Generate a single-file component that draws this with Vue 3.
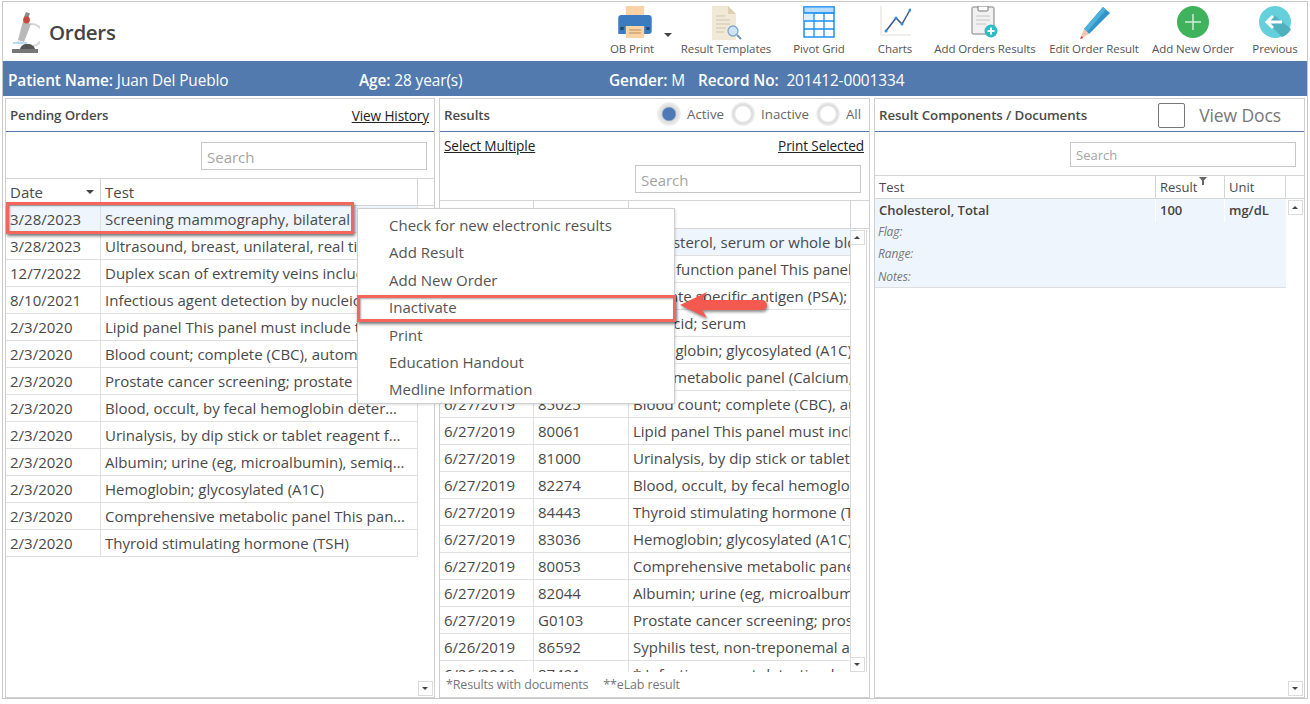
<script setup>
const tools = [
  { label: 'OB Print', icon: 'print' },
  { label: 'Result Templates', icon: 'tpl' },
  { label: 'Pivot Grid', icon: 'grid' },
  { label: 'Charts', icon: 'chart' },
  { label: 'Add Orders Results', icon: 'clip' },
  { label: 'Edit Order Result', icon: 'pencil' },
  { label: 'Add New Order', icon: 'plus' },
  { label: 'Previous', icon: 'prev' },
]
const pending = [
  ['3/28/2023', 'Screening mammography, bilateral'],
  ['3/28/2023', 'Ultrasound, breast, unilateral, real time with image documentation'],
  ['12/7/2022', 'Duplex scan of extremity veins including responses to compression'],
  ['8/10/2021', 'Infectious agent detection by nucleic acid (DNA or RNA)'],
  ['2/3/2020', 'Lipid panel This panel must include the following'],
  ['2/3/2020', 'Blood count; complete (CBC), automated'],
  ['2/3/2020', 'Prostate cancer screening; prostate specific antigen'],
  ['2/3/2020', 'Blood, occult, by fecal hemoglobin determination by immunoassay'],
  ['2/3/2020', 'Urinalysis, by dip stick or tablet reagent for bilirubin, glucose'],
  ['2/3/2020', 'Albumin; urine (eg, microalbumin), semiquantitative test result'],
  ['2/3/2020', 'Hemoglobin; glycosylated (A1C)'],
  ['2/3/2020', 'Comprehensive metabolic panel This panel must include the following'],
  ['2/3/2020', 'Thyroid stimulating hormone (TSH)'],
]
const results = [
  ['6/27/2019', '82465', 'Cholesterol, serum or whole blood, total'],
  ['6/27/2019', '80069', 'Renal function panel This panel must include'],
  ['6/27/2019', '84153', 'Prostate specific antigen (PSA); total'],
  ['6/27/2019', '84550', 'Uric acid; serum'],
  ['6/27/2019', '83036', 'Hemoglobin; glycosylated (A1C)'],
  ['6/27/2019', '80048', 'Basic metabolic panel (Calcium, total)'],
  ['6/27/2019', '85025', 'Blood count; complete (CBC), automated'],
  ['6/27/2019', '80061', 'Lipid panel This panel must include the following'],
  ['6/27/2019', '81000', 'Urinalysis, by dip stick or tablet reagent for'],
  ['6/27/2019', '82274', 'Blood, occult, by fecal hemoglobin determination'],
  ['6/27/2019', '84443', 'Thyroid stimulating hormone (TSH)'],
  ['6/27/2019', '83036', 'Hemoglobin; glycosylated (A1C)'],
  ['6/27/2019', '80053', 'Comprehensive metabolic panel This panel must'],
  ['6/27/2019', '82044', 'Albumin; urine (eg, microalbumin), semiquantitative'],
  ['6/27/2019', 'G0103', 'Prostate cancer screening; prostate specific antigen'],
  ['6/26/2019', '86592', 'Syphilis test, non-treponemal antibody; qualitative'],
  ['6/26/2019', '87491', '* Infectious agent detection by nucleic acid'],
]
const menu = ['Check for new electronic results', 'Add Result', 'Add New Order', 'Inactivate', 'Print', 'Education Handout', 'Medline Information']
</script>

<template>
  <div class="page">
    <div class="frame">
      <header class="top">
        <svg class="logo" width="28" height="42" viewBox="0 0 28 42">
          <path d="M18 13a11 11 0 0 1 3 22" fill="none" stroke="#d8d8d8" stroke-width="2"/>
          <path d="M11 10l8 3-7 18-6-2z" fill="#b9b9b9"/>
          <path d="M14 1l4 1.500-2 5-4-1.500z" fill="#8a8a8a"/>
          <circle cx="14.500" cy="9" r="3.400" fill="#c9483c"/>
          <path d="M6 29l5 2-1 3-5-2z" fill="#e4e4e4"/>
          <path d="M1 32h14" stroke="#9fd3f2" stroke-width="1.500"/>
          <path d="M8 38c1-3 3-5 7-5 5 0 7 2 8 5z" fill="#555"/>
          <rect x="0" y="38" width="26" height="4" fill="#777"/>
        </svg>
        <h1 class="title">Orders</h1>
        <nav class="tools">
          <div v-for="t in tools" :key="t.label" class="tool">
            <div class="tool-icon">
              <svg v-if="t.icon === 'print'" width="80" height="34" viewBox="0 0 80 34">
                <g transform="translate(23 0) scale(1.080 1)">
                  <rect x="10" y="0" width="17" height="12" fill="#fbd2a5"/>
                  <path d="M6 9h25a3 3 0 0 1 3 3v13a3 3 0 0 1-3 3H3V12a3 3 0 0 1 3-3z" fill="#3c7bbf"/>
                  <rect x="10" y="20" width="17" height="12" fill="#fbd2a5"/>
                  <path d="M13 24h11M13 27h11" stroke="#b98a5a"/>
                  <rect x="5" y="21" width="3" height="3" fill="#22456e"/>
                  <rect x="29" y="21" width="3" height="3" fill="#22456e"/>
                </g>
                <path d="M72 29h8l-4 4z" fill="#444" transform="translate(0 -2)"/>
              </svg>
              <svg v-else-if="t.icon === 'tpl'" width="34" height="34" viewBox="0 0 34 34">
                <path d="M3 0h16l8 8v26H3z" fill="#f1e8d6"/>
                <path d="M19 0l8 8h-8z" fill="#dccfb4"/>
                <path d="M7 10h9M7 14h14M7 18h14M7 22h10M7 26h8" stroke="#d2c7b0"/>
                <circle cx="24" cy="25" r="5" fill="#cfe3f6" stroke="#7fa6c9" stroke-width="1.300"/>
                <path d="M28 29l4 4" stroke="#6a8fb0" stroke-width="1.800"/>
              </svg>
              <svg v-else-if="t.icon === 'grid'" width="32" height="32" viewBox="0 0 32 32">
                <rect x="1" y="1" width="30" height="30" fill="#fff" stroke="#1e90f5" stroke-width="1.500"/>
                <rect x="1" y="1" width="30" height="6" fill="#b9dcfa" stroke="#1e90f5"/>
                <rect x="1" y="7" width="10" height="8" fill="#dcedfc"/>
                <path d="M1 7h30M1 15h30M1 23h30M11 7v24M21 7v24" stroke="#1e90f5" stroke-width="1.300"/>
              </svg>
              <svg v-else-if="t.icon === 'chart'" width="32" height="32" viewBox="0 0 32 32">
                <path d="M2 0v29h30" fill="none" stroke="#e2ded6"/>
                <path d="M7 25l10-13 6 6 8-14" fill="none" stroke="#3b5a85" stroke-width="1.500"/>
                <circle cx="7" cy="25" r="1.500" fill="#2f8fe6"/>
                <circle cx="17" cy="12" r="1.500" fill="#2f8fe6"/>
                <circle cx="23" cy="18" r="1.500" fill="#2f8fe6"/>
                <circle cx="31" cy="4" r="1.500" fill="#2f8fe6"/>
              </svg>
              <svg v-else-if="t.icon === 'clip'" width="28" height="32" viewBox="0 0 28 32">
                <rect x="1" y="1" width="22" height="27" rx="2" fill="#f1f1f1" stroke="#a9a9a9" stroke-width="1.500"/>
                <rect x="7" y="0" width="10" height="5" rx="1" fill="#fff" stroke="#777"/>
                <path d="M5 10h14M5 14h14M5 18h10" stroke="#c4c4c4"/>
                <circle cx="20" cy="25" r="6.500" fill="#2ebcc4"/>
                <path d="M20 21.500v7M16.500 25h7" stroke="#fff" stroke-width="2"/>
              </svg>
              <svg v-else-if="t.icon === 'pencil'" width="34" height="34" viewBox="0 0 34 34">
                <path d="M7 23L26 1l7 6-21 21z" fill="#3095c8"/>
                <path d="M7 23L26 1l3 2.500L10 26z" fill="#4fb0dc"/>
                <path d="M7 23l5 5-9 5z" fill="#f4c6ad"/>
                <path d="M3 33l1.500-3 2 2z" fill="#c44"/>
              </svg>
              <svg v-else-if="t.icon === 'plus'" width="32" height="32" viewBox="0 0 32 32">
                <circle cx="16" cy="16" r="16" fill="#3fb35c"/>
                <path d="M16 8v16M8 16h16" stroke="#cfeed7" stroke-width="1.500"/>
              </svg>
              <svg v-else width="32" height="32" viewBox="0 0 32 32">
                <circle cx="16" cy="16" r="16" fill="#66cfdc"/>
                <path d="M8 16l8-6 16 13a16 16 0 0 1-9 8z" fill="#4fb0be"/>
                <path d="M8 16h15M14 10l-6 6 6 6" fill="none" stroke="#fff" stroke-width="3"/>
              </svg>
            </div>
            <span class="tool-label">{{ t.label }}</span>
          </div>
        </nav>
      </header>

      <div class="patient">
        <span><b>Patient Name:</b> Juan Del Pueblo</span>
        <span><b>Age:</b> 28 year(s)</span>
        <span><b>Gender:</b> M</span>
        <span><b>Record No:</b>&nbsp; 201412-0001334</span>
      </div>

      <main class="panels">
        <section class="panel">
          <div class="phead">
            <span class="ptitle">Pending Orders</span>
            <a class="link">View History</a>
          </div>
          <div class="search-row left-search"><div class="search">Search</div></div>
          <div class="ghead left-cols">
            <div class="cell">Date<i class="sort"></i></div>
            <div class="cell">Test</div>
            <div class="cell"></div>
          </div>
          <div class="gbody">
            <div v-for="(r, i) in pending" :key="i" class="row left-cols" :class="{ sel: i === 0 }">
              <div class="cell">{{ r[0] }}</div>
              <div class="cell ell">{{ r[1] }}</div>
            </div>
            <button class="sb sb-down"></button>
          </div>
        </section>

        <section class="panel">
          <div class="phead">
            <span class="ptitle">Results</span>
            <div class="radios">
              <label class="radio on"><i></i>Active</label>
              <label class="radio"><i></i>Inactive</label>
              <label class="radio"><i></i>All</label>
            </div>
          </div>
          <div class="links"><a class="link">Select Multiple</a><a class="link">Print Selected</a></div>
          <div class="search-row mid-search"><div class="search">Search</div></div>
          <div class="ghead mid-cols mid-head">
            <div class="cell">Date</div>
            <div class="cell">Code</div>
            <div class="cell">Test</div>
            <div class="cell"></div>
          </div>
          <div class="gbody mid-body">
            <div v-for="(r, i) in results" :key="i" class="row mid-cols" :class="{ sel: i === 0 }">
              <div class="cell">{{ r[0] }}</div>
              <div class="cell">{{ r[1] }}</div>
              <div class="cell clip">{{ r[2] }}</div>
            </div>
            <div class="mid-scroll">
              <button class="sb"><i class="up"></i></button>
              <button class="sb"></button>
            </div>
          </div>
          <div class="foot"><span>*Results with documents</span><span>**eLab result</span></div>
        </section>

        <section class="panel">
          <div class="phead">
            <span class="ptitle">Result Components / Documents</span>
            <div class="docs"><i class="check"></i><span>View Docs</span></div>
          </div>
          <div class="search-row right-search"><div class="search small">Search</div></div>
          <div class="ghead right-cols right-head">
            <div class="cell">Test</div>
            <div class="cell">Result
              <svg class="funnel" width="8" height="8" viewBox="0 0 8 8"><path d="M0 0h8L5 3.500V8H3V3.500z" fill="#666"/></svg>
            </div>
            <div class="cell">Unit</div>
            <div class="cell"></div>
          </div>
          <div class="gbody">
            <div class="comp">
              <div class="comp-main right-cols">
                <div class="cell">Cholesterol, Total</div>
                <div class="cell">100</div>
                <div class="cell">mg/dL</div>
              </div>
              <div class="meta">Flag:</div>
              <div class="meta">Range:</div>
              <div class="meta">Notes:</div>
            </div>
            <button class="sb sb-up"><i class="up"></i></button>
            <button class="sb sb-down"></button>
          </div>
        </section>
      </main>
    </div>

    <div class="mark mark-row"></div>
    <ul class="ctx">
      <li v-for="m in menu" :key="m">{{ m }}</li>
    </ul>
    <div class="mark mark-item"></div>
    <svg class="arrow" width="92" height="32" viewBox="0 0 92 32">
      <path d="M2 14L29 1l-5 8h60a5 5 0 0 1 0 10H24l5 8z" fill="#f4594f"/>
    </svg>
  </div>
</template>

<style>
html, body { margin: 0; background: #fff; }
</style>

<style scoped>
.page {
  position: relative;
  width: 1310px;
  height: 704px;
  overflow: hidden;
  background: #fff;
  font-family: "Open Sans", "Noto Sans", sans-serif;
  font-size: 15px;
  color: #4a4a4a;
}
.frame {
  box-sizing: border-box;
  margin: 1px 0 0 2px;
  width: 1306px;
  height: 698px;
  border: 1px solid #c8c8c8;
  display: flex;
  flex-direction: column;
}
.top { height: 59px; display: flex; align-items: center; flex: none; }
.logo { margin: 0 0 0 9px; }
.title { margin: 0 0 0 9px; font-size: 20.500px; font-weight: 600; color: #444; letter-spacing: -0.3px; }
.tools {
  margin-left: auto;
  align-self: flex-start;
  display: grid;
  grid-template-columns: 94px 94px 92px 60px 120px 98px 100px 64px;
  width: 722px;
}
.tool { display: flex; flex-direction: column; align-items: center; height: 56px; padding-top: 4px; box-sizing: border-box; }
.tool-icon { height: 36px; display: flex; align-items: flex-start; justify-content: center; }
.tool-label { font-size: 11.500px; line-height: 14px; color: #555; white-space: nowrap; letter-spacing: -0.1px; }

.patient {
  flex: none;
  box-sizing: border-box;
  height: 35px;
  background: #527aae;
  color: #fff;
  display: grid;
  grid-template-columns: 351px 250px 89px auto;
  align-items: center;
  padding: 3px 0 0 5px;
  font-size: 15.400px;
  letter-spacing: -0.1px;
}
.patient b { font-weight: 600; }

.panels {
  flex: 1;
  min-height: 0;
  display: grid;
  grid-template-columns: 430px 431px 431px;
  column-gap: 4px;
  padding: 2px 0 0 2px;
  height: 600px;
}
.panel {
  box-sizing: border-box;
  height: 600px;
  border: 1px solid #cfcfcf;
  display: flex;
  flex-direction: column;
  position: relative;
}
.phead {
  flex: none;
  box-sizing: border-box;
  height: 33px;
  border-bottom: 1px solid #527aae;
  display: flex;
  align-items: center;
  justify-content: space-between;
  padding: 0 5px 0 4px;
}
.ptitle { font-size: 13.300px; font-weight: 600; color: #4a4a4a; letter-spacing: -0.1px; }
.link { font-size: 13.600px; color: #222; text-decoration: underline; letter-spacing: -0.1px; }

.search-row { flex: none; display: flex; justify-content: flex-end; box-sizing: border-box; }
.left-search { height: 46px; padding: 10px 7px 0 0; }
.mid-search { height: 41px; padding: 6px 8px 0 0; }
.right-search { height: 43px; padding: 10px 8px 0 0; }
.search {
  box-sizing: border-box;
  width: 226px;
  height: 28px;
  border: 1px solid #c8c8c8;
  color: #a5a5a5;
  font-size: 15px;
  line-height: 28px;
  padding-left: 5px;
}
.search.small { height: 25px; line-height: 24px; font-size: 13px; }

.links {
  flex: none;
  display: flex;
  justify-content: space-between;
  padding: 5px 5px 0 4px;
  height: 27px;
  box-sizing: border-box;
  line-height: 18px;
}

.ghead {
  flex: none;
  height: 28px;
  border-top: 1px solid #d5d5d5;
  border-bottom: 1px solid #d5d5d5;
  box-sizing: border-box;
  display: grid;
  background: #fff;
}
.left-cols { display: grid; grid-template-columns: 95px 317px 16px; }
.mid-cols { display: grid; grid-template-columns: 94px 95px 222px 18px; }
.right-cols { display: grid; grid-template-columns: 281px 69px 61px 18px; }
.mid-head { height: 29px; }
.right-head { height: 24px; font-size: 13px; }
.cell {
  box-sizing: border-box;
  padding-left: 4px;
  border-right: 1px solid #e0e0e0;
  white-space: nowrap;
  overflow: hidden;
  line-height: 26px;
  position: relative;
}
.ghead .cell { border-right-color: #d5d5d5; }
.ghead .cell:last-child { border-right: 0; }
.right-head .cell { line-height: 22px; }
.sort {
  position: absolute;
  right: 6px;
  top: 11px;
  border: 4px solid transparent;
  border-top-color: #444;
  border-bottom: 0;
}
.funnel { position: absolute; left: 43px; top: 1px; }
.gbody { flex: 1; min-height: 0; position: relative; overflow: hidden; }
.row { height: 27px; box-sizing: border-box; }
.row .cell { border-bottom: 1px solid #e0e0e0; }
.left-cols.row { grid-template-columns: 95px 317px; width: 412px; }
.mid-cols.row { grid-template-columns: 94px 95px 222px; width: 411px; }
.row.sel .cell { background: #eef5fc; }
.ell { text-overflow: ellipsis; padding-right: 9px; }
.clip { text-overflow: clip; }

.sb {
  display: block;
  box-sizing: border-box;
  width: 15px;
  height: 15px;
  padding: 0;
  border: 1px solid #dcdcdc;
  background: #fff;
  position: relative;
}
.sb::after {
  content: "";
  position: absolute;
  left: 3px;
  top: 5px;
  border: 3.500px solid transparent;
  border-top-color: #444;
  border-bottom: 0;
}
.sb:has(.up)::after { border-top: 0; border-bottom: 3.500px solid #444; border-top-color: transparent; }
.sb-down { position: absolute; right: 1px; bottom: 1px; }
.sb-up { position: absolute; right: 1px; top: 1px; }
.mid-scroll {
  position: absolute;
  right: 2px;
  top: 1px;
  bottom: 0;
  width: 15px;
  display: flex;
  flex-direction: column;
  justify-content: space-between;
  border-left: 1px solid #d8d8d8;
  border-right: 1px solid #d8d8d8;
}
.mid-scroll .sb { margin-left: -1px; }
.foot {
  flex: none;
  height: 25px;
  font-size: 12.500px;
  color: #777;
  display: flex;
  gap: 15px;
  padding-left: 6px;
  align-items: center;
  letter-spacing: -0.15px;
}

.radios { display: flex; align-items: center; font-size: 13.300px; color: #666; margin: -3px 3px 0 0; }
.radio { display: flex; align-items: center; }
.radio i {
  box-sizing: border-box;
  width: 24px;
  height: 24px;
  margin: 0 6px 0 7px;
  border-radius: 50%;
  background: radial-gradient(circle, #fff 0 7px, #dadada 9px, #f2f2f2 12px);
}
.radio.on i { background: radial-gradient(circle, #4f79b4 0 6px, #dadada 7.500px, #f2f2f2 12px); }

.docs { display: flex; align-items: center; gap: 14px; color: #777; font-size: 17.500px; margin-right: 18px; letter-spacing: -0.1px; }
.check { display: block; width: 27px; height: 25px; box-sizing: border-box; border: 1px solid #777; border-radius: 2px; }

.comp { width: 411px; height: 89px; background: #eef5fc; border-bottom: 1px solid #dedede; box-sizing: border-box; }
.comp-main { height: 23px; font-size: 13px; font-weight: 600; color: #444; }
.comp-main .cell { line-height: 22px; border-right: 1px solid #fff; }
.comp-main .cell:nth-child(3) { border-right: 0; }
.meta { height: 22.300px; line-height: 20px; padding-left: 3px; font-size: 12px; font-style: italic; color: #777; letter-spacing: -0.1px; }

.ctx {
  position: absolute;
  left: 357px;
  top: 208px;
  width: 318px;
  height: 196px;
  margin: 0;
  padding: 3px 0 0 31px;
  box-sizing: border-box;
  list-style: none;
  background: #fff;
  border: 1px solid #cfcfcf;
  box-shadow: 1px 1px 2px rgba(0, 0, 0, 0.12);
  font-size: 15px;
  color: #555;
}
.ctx li { height: 27.400px; line-height: 27px; white-space: nowrap; }

.mark {
  position: absolute;
  box-sizing: border-box;
  border: 3px solid #f2665c;
  box-shadow: 1px 2px 3px rgba(0, 0, 0, 0.55), inset 1px 1px 2px rgba(0, 0, 0, 0.35);
}
.mark-row { left: 6px; top: 202px; width: 348px; height: 32px; }
.mark-item { left: 357px; top: 295px; width: 319px; height: 27px; }
.arrow {
  position: absolute;
  left: 678px;
  top: 291px;
  filter: drop-shadow(1px 2px 1.500px rgba(0, 0, 0, 0.45));
}
</style>
